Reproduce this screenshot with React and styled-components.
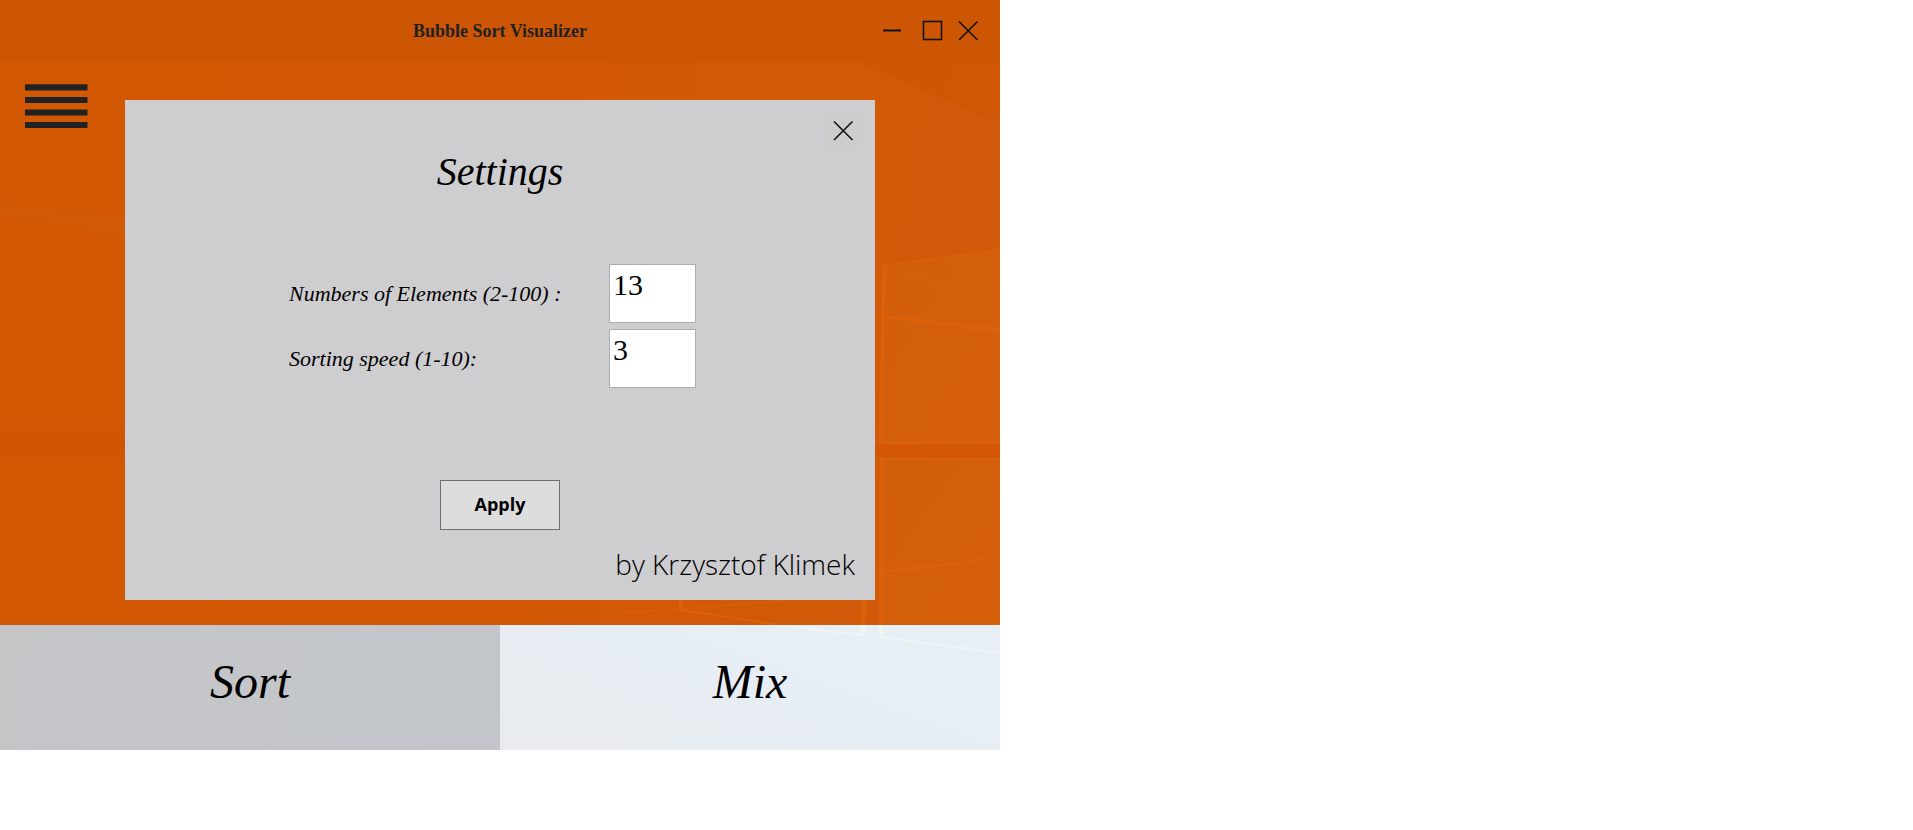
import React, { useState } from "react";
import styled, { createGlobalStyle } from "styled-components";

const script = `Gabriola, "Liberation Serif", serif`;

const GlobalStyle = createGlobalStyle`
  *, *::before, *::after { box-sizing: border-box; }
  body { margin: 0; background: #fff; color: #000; }
  button { margin: 0; padding: 0; border: 0; background: none; color: inherit; cursor: pointer; }
  h1, h2, p { margin: 0; }
`;

const Window = styled.main`
  width: 100%;
  max-width: 1000px;
`;

const TitleBar = styled.header`
  display: grid;
  grid-template-columns: 1fr auto 1fr;
  align-items: center;
  height: 62px;
  padding: 0 14px;
  background: #cd5604;
`;

const AppTitle = styled.h1`
  grid-column: 2;
  font: bold 18px/24px "Liberation Serif", serif;
  color: #222;
`;

const WindowControls = styled.div`
  display: flex;
  justify-content: flex-end;
`;

const IconButton = styled.button`
  width: 36px;
  height: 36px;
  margin-right: ${(p) => (p.$spaced ? "4px" : "0")};
  background: ${(p) => p.$tint || "transparent"};

  svg { display: block; }
`;

const Stage = styled.section`
  position: relative;
  display: grid;
  grid-template-columns: 125px minmax(0, 1fr) 125px;
  align-items: start;
  padding: 21px 0 25px;
  border-top: 1px solid #d45604;
  background: linear-gradient(100deg, #d25804 0%, #d25805 50%, #d05b0b 100%);
`;

const Wallpaper = styled.svg`
  position: absolute;
  inset: 0;
  width: 100%;
  height: 100%;
`;

const MenuButton = styled.button`
  position: relative;
  width: 63px;
  height: 44px;
  margin-left: 25px;

  svg { display: block; }
`;

const Dialog = styled.section`
  position: relative;
  display: flex;
  flex-direction: column;
  align-items: center;
  margin-top: 16px;
  padding: 13px 14px 20px;
  background: #cecdcf;
`;

const DialogHead = styled.div`
  display: flex;
  align-self: flex-end;
`;

const DialogTitle = styled.h2`
  font: italic 40px/46px ${script};
`;

const Form = styled.form`
  display: flex;
  flex-direction: column;
  align-items: center;
  width: 100%;
  margin-top: 69px;
`;

const Fields = styled.div`
  display: grid;
  gap: 6px;
  width: 100%;
  max-width: 422px;
`;

const Field = styled.div`
  display: grid;
  grid-template-columns: 320px 87px;
  align-items: center;
`;

const FieldLabel = styled.label`
  font: italic 22px/28px ${script};
`;

const FieldInput = styled.input`
  width: 100%;
  height: 59px;
  padding: 0 3px 18px;
  border: 1px solid #abadb3;
  border-radius: 0;
  background: #fff;
  color: #000;
  font: 30px/34px "Liberation Serif", serif;
  outline: none;
`;

const ApplyButton = styled.button`
  width: 120px;
  height: 50px;
  margin-top: 92px;
  padding-bottom: 2px;
  border: 1px solid #707070;
  background: #ddd;
  font: bold 18px/24px "Open Sans", sans-serif;
`;

const Byline = styled.p`
  align-self: flex-end;
  margin-top: 18px;
  padding-right: 6px;
  font: 300 28px/32px "Open Sans", sans-serif;
`;

const Actions = styled.footer`
  display: grid;
  grid-template-columns: 1fr 1fr;
`;

const ActionButton = styled.button`
  position: relative;
  height: 125px;
  padding-bottom: 12px;
  background: ${(p) => p.$fill};
  font: italic 48px/56px ${script};

  span { position: relative; }
`;

const SORT_FILL = "linear-gradient(100deg, #c5c5c8 0%, #c4c6c9 40%, #c3c6ca 70%, #c2c6cb 100%)";
const MIX_FILL = "linear-gradient(20deg, #e8ebed 0%, #e8edf1 25%, #e7edf5 55%, #e8f0f6 100%)";

const Glyph = ({ children, width = 2 }) => (
  <svg width="36" height="36" viewBox="0 0 36 36" fill="none" stroke="#111" strokeWidth={width} aria-hidden="true">
    {children}
  </svg>
);

const CloseGlyph = () => (
  <Glyph width={1.6}>
    <path d="M9 8.5 27.5 27M27.5 8.5 9 27" />
  </Glyph>
);

function StageArt() {
  return (
    <Wallpaper viewBox="0 0 1000 563" preserveAspectRatio="none" aria-hidden="true">
      <defs>
        <linearGradient id="pane" x1="0" x2="1" y1="0" y2="1">
          <stop offset="0" stopColor="#d15e0c" />
          <stop offset="1" stopColor="#d7600b" />
        </linearGradient>
        <linearGradient id="band" x1="0" x2="0" y1="0" y2="1">
          <stop offset="0" stopColor="#ce5402" stopOpacity="0" />
          <stop offset="0.5" stopColor="#ce5402" />
          <stop offset="1" stopColor="#ce5402" stopOpacity="0.3" />
        </linearGradient>
      </defs>
      <path d="M0 141 125 157V173L0 151Z" fill="#d05c0b" opacity="0.6" />
      <path d="M0 360H125V400H0Z" fill="url(#band)" />
      <path d="M860 0H1000V60Z" fill="#cf5603" opacity="0.7" />
      <path d="M882 203 1000 186V381H880Z" fill="url(#pane)" />
      <path d="M875 382H1000V395H875Z" fill="#d25605" />
      <path d="M880 396H1000V563H880Z" fill="url(#pane)" />
      <g fill="none" stroke="#dc610b">
        <path d="M884 203 881 381" strokeWidth="4" />
        <path d="M882 203 1000 187" strokeWidth="2" opacity="0.6" />
        <path d="M885 209 1000 230" strokeWidth="3" opacity="0.5" />
        <path d="M885 254 1000 268" strokeWidth="4" />
        <path d="M880 381H1000" strokeWidth="2" />
        <path d="M880 396H1000" strokeWidth="2" opacity="0.5" />
        <path d="M882 395 881 563" strokeWidth="4" />
        <path d="M882 510 1000 496" strokeWidth="3" />
        <path d="M864 538 863 563" strokeWidth="5" />
        <path d="M681 536V549" strokeWidth="4" />
        <path d="M620 551 680 547 790 538" strokeWidth="2" opacity="0.6" />
        <path d="M680 548 780 563" strokeWidth="2" />
      </g>
    </Wallpaper>
  );
}

function FloorArt() {
  return (
    <Wallpaper viewBox="0 0 500 125" preserveAspectRatio="none" aria-hidden="true">
      <g fill="none" stroke="#f1f4f5">
        <path d="M285 1 363 10" strokeWidth="2" />
        <path d="M363 0V11" strokeWidth="5" />
        <path d="M381 0V13" strokeWidth="4" />
        <path d="M380 12 500 28" strokeWidth="2" />
      </g>
    </Wallpaper>
  );
}

export default function App() {
  const [elements, setElements] = useState("13");
  const [speed, setSpeed] = useState("3");

  return (
    <>
      <GlobalStyle />
      <Window>
        <TitleBar>
          <AppTitle>Bubble Sort Visualizer</AppTitle>
          <WindowControls>
            <IconButton type="button" aria-label="Minimize" $spaced>
              <Glyph><path d="M9 17.5H27" /></Glyph>
            </IconButton>
            <IconButton type="button" aria-label="Maximize">
              <Glyph width={1.6}><rect x="9.5" y="8.5" width="18" height="18" /></Glyph>
            </IconButton>
            <IconButton type="button" aria-label="Close window">
              <CloseGlyph />
            </IconButton>
          </WindowControls>
        </TitleBar>

        <Stage>
          <StageArt />
          <MenuButton type="button" aria-label="Menu">
            <svg width="63" height="44" viewBox="0 0 63 44" fill="#222" aria-hidden="true">
              <path d="M0 .3H62.5V6.6H0ZM0 13H62.5V19H0ZM0 25.4H62.5V31.6H0ZM0 38H62.5V44H0Z" />
            </svg>
          </MenuButton>

          <Dialog role="dialog" aria-labelledby="settings-title">
            <DialogHead>
              <IconButton type="button" aria-label="Close settings" $tint="#cdcdcd">
                <CloseGlyph />
              </IconButton>
            </DialogHead>
            <DialogTitle id="settings-title">Settings</DialogTitle>
            <Form onSubmit={(e) => e.preventDefault()}>
              <Fields>
                <Field>
                  <FieldLabel htmlFor="elements">Numbers of Elements (2-100) :</FieldLabel>
                  <FieldInput id="elements" value={elements} onChange={(e) => setElements(e.target.value)} />
                </Field>
                <Field>
                  <FieldLabel htmlFor="speed">Sorting speed (1-10):</FieldLabel>
                  <FieldInput id="speed" value={speed} onChange={(e) => setSpeed(e.target.value)} />
                </Field>
              </Fields>
              <ApplyButton type="submit">Apply</ApplyButton>
            </Form>
            <Byline>by Krzysztof Klimek</Byline>
          </Dialog>
        </Stage>

        <Actions>
          <ActionButton type="button" $fill={SORT_FILL}>
            <span>Sort</span>
          </ActionButton>
          <ActionButton type="button" $fill={MIX_FILL}>
            <FloorArt />
            <span>Mix</span>
          </ActionButton>
        </Actions>
      </Window>
    </>
  );
}
